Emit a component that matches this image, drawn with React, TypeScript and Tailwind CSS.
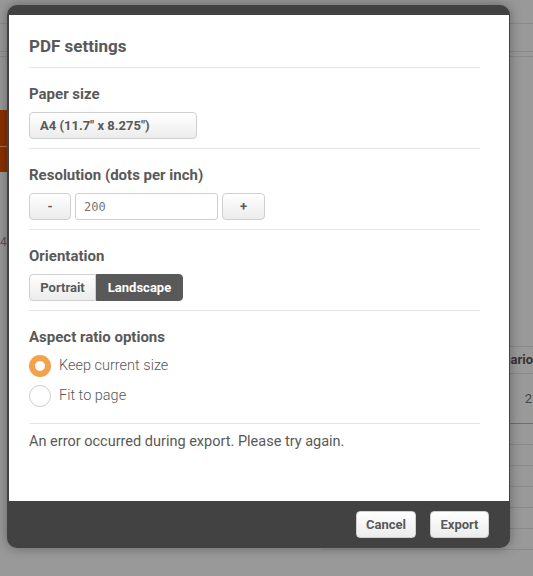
import { useState } from "react";

const font = { fontFamily: "Roboto, 'Liberation Sans', sans-serif" };

function Divider() {
  return <div className="h-px bg-[#e6e6e6]" />;
}

function Label({ children }: { children: React.ReactNode }) {
  return <div className="h-5 text-[15px] font-bold leading-5 text-[#595959]">{children}</div>;
}

const btn =
  "h-[27px] rounded-[4px] border border-[#cfcfcf] bg-gradient-to-b from-white to-[#ececec] text-[13px] font-bold text-[#595959]";

export default function App() {
  const [orientation, setOrientation] = useState<"portrait" | "landscape">("landscape");
  const [aspect, setAspect] = useState<"keep" | "fit">("keep");
  const [dpi, setDpi] = useState(200);

  return (
    <div className="relative h-[576px] w-full overflow-hidden bg-[#999999]" style={font}>
      {/* Background app (dimmed) */}
      <div className="flex h-full flex-col">
        <div className="mt-[23px] h-px bg-[#8a8a8a]" />
        <div className="mt-[27px] h-px bg-[#8a8a8a]" />
        <div className="mt-[4px] h-px bg-[#8a8a8a]" />
        <div className="flex flex-1">
          <div className="w-[8px] pt-[53px]">
            <div className="h-[36px] bg-[#8a3000]" />
            <div className="h-px bg-[#b07050]" />
            <div className="h-[25px] bg-[#8a3000]" />
            <div className="mt-[62px] text-[12px] leading-4 text-[#555]">4</div>
          </div>
          <div className="flex-1" />
          <div className="w-[212px] pt-[289px]">
            <div className="h-px bg-[#8a8a8a]" />
            <div className="flex h-[26px] items-center justify-end overflow-hidden whitespace-nowrap text-[13px] font-bold text-[#333]">
              Scenario
            </div>
            <div className="h-px bg-[#8a8a8a]" />
            <div className="flex h-[49px] items-center justify-end pr-[1px] text-[13px] text-[#444]">2</div>
            <div className="h-px bg-[#6e6e6e]" />
            {Array.from({ length: 6 }).map((_, i) => (
              <div key={i} className="h-[21px] border-b border-[#8a8a8a]" />
            ))}
          </div>
        </div>
      </div>

      {/* Modal */}
      <div className="absolute left-[7px] top-[5px] flex h-[543px] w-[503px] flex-col rounded-[10px] bg-[#424242] pb-0 pl-[2px] pr-[1px] pt-[10px] shadow-[0_0_12px_rgba(0,0,0,0.35)]">
        <div className="flex h-[486px] flex-col bg-white pl-5 pr-[29px]">
          <div className="pb-[9px] pt-[19px] text-[17px] font-bold leading-6 text-[#595959]">PDF settings</div>
          <Divider />

          <div className="pb-[9px] pt-4">
            <Label>Paper size</Label>
            <button className={`${btn} mt-2 w-[168px] pl-[10px] text-left`}>A4 (11.7" x 8.275")</button>
          </div>
          <Divider />

          <div className="pb-[9px] pt-4">
            <Label>Resolution (dots per inch)</Label>
            <div className="mt-2 flex gap-1">
              <button className={`${btn} w-[42px]`} onClick={() => setDpi((d) => d - 1)}>
                -
              </button>
              <input
                value={dpi}
                onChange={(e) => setDpi(Number(e.target.value) || 0)}
                className="h-[27px] w-[143px] rounded-[3px] border border-[#cfcfcf] pl-2 text-[12px] text-[#777] outline-none"
                style={{ fontFamily: "'DejaVu Sans Mono', monospace" }}
              />
              <button className={`${btn} w-[43px]`} onClick={() => setDpi((d) => d + 1)}>
                +
              </button>
            </div>
          </div>
          <Divider />

          <div className="pb-[9px] pt-4">
            <Label>Orientation</Label>
            <div className="mt-2 flex">
              <button
                onClick={() => setOrientation("portrait")}
                className={`h-[27px] w-[67px] rounded-l-[4px] border text-[13px] font-bold ${
                  orientation === "portrait"
                    ? "border-[#595959] bg-[#595959] text-white"
                    : "border-[#cfcfcf] bg-gradient-to-b from-white to-[#ececec] text-[#595959]"
                }`}
              >
                Portrait
              </button>
              <button
                onClick={() => setOrientation("landscape")}
                className={`h-[27px] w-[87px] rounded-r-[4px] border text-[13px] font-bold ${
                  orientation === "landscape"
                    ? "border-[#595959] bg-[#595959] text-white"
                    : "border-[#cfcfcf] bg-gradient-to-b from-white to-[#ececec] text-[#595959]"
                }`}
              >
                Landscape
              </button>
            </div>
          </div>
          <Divider />

          <div className="pb-3 pt-4">
            <Label>Aspect ratio options</Label>
            <div className="mt-1">
              {([
                ["keep", "Keep current size"],
                ["fit", "Fit to page"],
              ] as const).map(([k, text]) => (
                <div key={k} className="flex h-[30px] cursor-pointer items-center" onClick={() => setAspect(k)}>
                  {aspect === k ? (
                    <span className="flex h-[22px] w-[22px] items-center justify-center rounded-full bg-[#f5a04a]">
                      <span className="h-[10px] w-[10px] rounded-full bg-white" />
                    </span>
                  ) : (
                    <span className="h-[22px] w-[22px] rounded-full border border-[#cccccc] bg-white" />
                  )}
                  <span className="ml-2 text-[14.5px] font-light text-[#595959]">{text}</span>
                </div>
              ))}
            </div>
          </div>
          <Divider />

          <div className="pt-2 text-[14.5px] leading-5 text-[#595959]">
            An error occurred during export. Please try again.
          </div>
        </div>

        {/* Footer */}
        <div className="flex justify-end gap-[14px] pr-5 pt-[10px]">
          <button className={`${btn} w-[60px] border-[#bdbdbd]`}>Cancel</button>
          <button className={`${btn} w-[59px] border-[#bdbdbd]`}>Export</button>
        </div>
      </div>
    </div>
  );
}
